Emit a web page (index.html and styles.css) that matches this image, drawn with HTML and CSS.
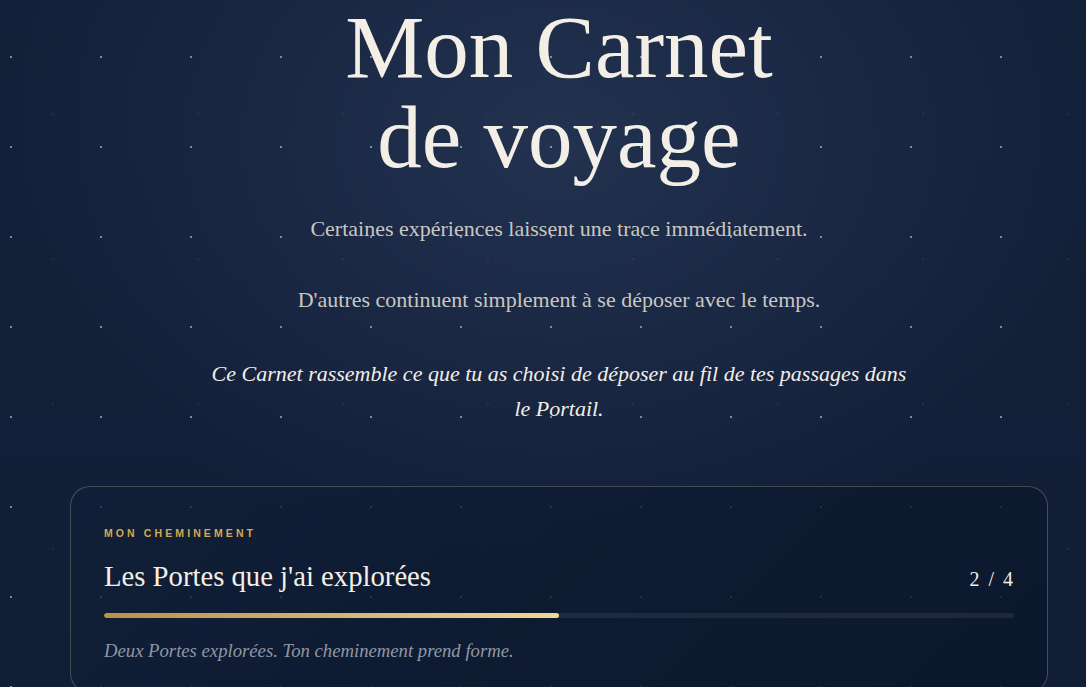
FILE: index.html
```html
<!DOCTYPE html>
<html lang="fr">
<head>
<meta charset="utf-8">
<title>Mon Carnet de voyage</title>
<link rel="stylesheet" href="styles.css">
</head>
<body>
<main class="page">
  <header class="hero">
    <h1 class="hero-title">Mon Carnet<br>de voyage</h1>
    <p class="hero-text">Certaines expériences laissent une trace immédiatement.</p>
    <p class="hero-text hero-text-2">D'autres continuent simplement à se déposer avec le temps.</p>
    <p class="hero-text hero-em">Ce Carnet rassemble ce que tu as choisi de déposer au fil de tes passages dans le Portail.</p>
  </header>
  <section class="card">
    <div class="card-label">MON CHEMINEMENT</div>
    <div class="card-head">
      <h2 class="card-title">Les Portes que j'ai explorées</h2>
      <span class="card-count">2 / 4</span>
    </div>
    <div class="progress"><div class="progress-fill" style="width:50%"></div></div>
    <p class="card-note">Deux Portes explorées. Ton cheminement prend forme.</p>
  </section>
</main>
</body>
</html>
```
FILE: styles.css
```css
html, body {
  margin: 0;
  padding: 0;
}
body {
  min-height: 100vh;
  font-family: "Liberation Serif", "Times New Roman", serif;
  color: #f3efe6;
  background-color: #121e36;
  background-image:
    radial-gradient(circle at 11px 57px, rgba(160,172,195,0.75) 0, rgba(160,172,195,0.75) 1px, transparent 1.4px),
    radial-gradient(circle at 53px 114px, rgba(190,170,110,0.45) 0, transparent 0.9px),
    radial-gradient(ellipse 560px 420px at 559px 140px, #22324f 0%, #1a2844 50%, rgba(18,30,54,0) 100%),
    linear-gradient(180deg, #122039 0%, #121e36 100%);
  background-size: 90px 90px, 145px 145px, 100% 100%, 100% 100%;
  overflow: hidden;
}
.page {
  padding: 2px 38px 0 70px;
}
.hero {
  text-align: center;
}
.hero-title {
  margin: 0;
  font-weight: normal;
  font-size: 89px;
  line-height: 90px;
  color: #f3efe6;
}
.hero-text {
  margin: 29px auto 0;
  max-width: 700px;
  font-size: 22px;
  line-height: 35px;
  color: #c9c7c2;
}
.hero-text-2 {
  margin-top: 36px;
}
.hero-em {
  margin-top: 39px;
  font-style: italic;
  color: #f2eee6;
}
.card {
  margin-top: 60px;
  border: 1px solid rgba(190,180,160,0.32);
  border-radius: 20px;
  padding: 39px 33px 30px;
  background: linear-gradient(135deg, rgba(16,31,56,0.75) 0%, rgba(11,23,43,0.85) 100%);
}
.card-label {
  font-family: "Liberation Sans", Arial, sans-serif;
  font-weight: bold;
  font-size: 10.5px;
  letter-spacing: 3.1px;
  color: #d4aa4f;
  line-height: 14px;
}
.card-head {
  display: flex;
  justify-content: space-between;
  align-items: baseline;
  margin-top: 19px;
}
.card-title {
  margin: 0;
  font-weight: normal;
  font-size: 28.7px;
  line-height: 34px;
  color: #f3efe6;
}
.card-count {
  font-size: 20px;
  letter-spacing: 1px;
  word-spacing: 2px;
  color: #f3efe6;
}
.progress {
  margin-top: 20px;
  height: 5px;
  border-radius: 3px;
  background: rgba(255,255,255,0.07);
  overflow: hidden;
}
.progress-fill {
  height: 100%;
  border-radius: 3px;
  background: linear-gradient(90deg, #b8914a 0%, #d8ba78 60%, #efd795 100%);
}
.card-note {
  margin: 22px 0 0;
  font-style: italic;
  font-size: 18.7px;
  line-height: 22px;
  color: #8f97a5;
}
```
